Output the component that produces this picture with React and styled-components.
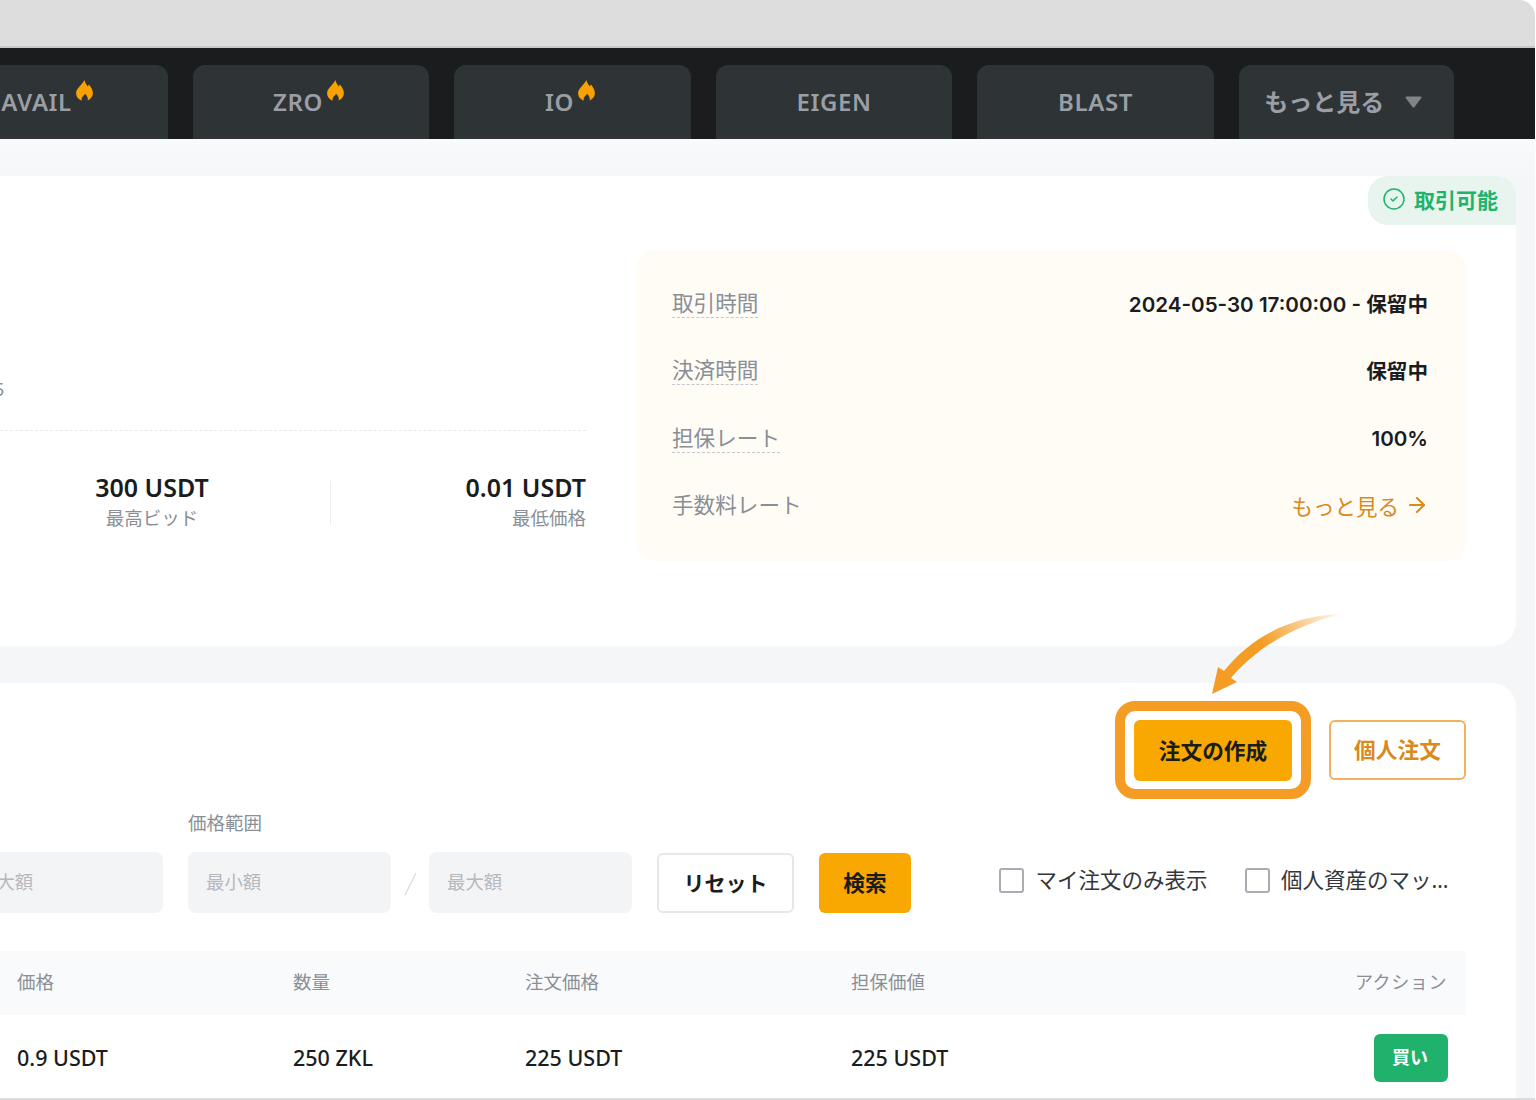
import React from "react";
import styled, { createGlobalStyle } from "styled-components";
import { ArrowRight, CircleCheck } from "lucide-react";

const Global = createGlobalStyle`
  html, body { margin: 0; padding: 0; background: #fff; }
  body { font-family: "Noto Sans", "Noto Sans CJK JP", sans-serif; color: #1a1c1e; }
  * { box-sizing: border-box; }
`;

const Viewport = styled.div`
  position: relative;
  width: 1536px;
  height: 1100px;
  overflow: hidden;
  background: #fff;
`;
const Frame = styled.div`
  width: 1534.5px;
  height: 1100px;
  display: flex;
  flex-direction: column;
  border-top-right-radius: 16px;
  border-bottom: 2px solid #dcdcdc;
  overflow: hidden;
  background: #f5f6f8;
`;
const ChromeBar = styled.div`
  flex: none;
  height: 48px;
  background: #dddddd;
  border-bottom: 2px solid #c8c8c8;
`;
const Nav = styled.nav`
  flex: none;
  height: 91px;
  padding: 17px 0 0 0;
  margin-left: -68.7px;
  display: flex;
  gap: 25px;
  background: #1a1c1e;
`;
const Tab = styled.div`
  flex: none;
  width: ${(p) => p.$w || 236.5}px;
  height: 74px;
  display: flex;
  align-items: center;
  justify-content: center;
  gap: 4px;
  padding-right: ${(p) => p.$pr || 0}px;
  padding-bottom: ${(p) => p.$pb || 0}px;
  background: #2e3336;
  border-radius: 12px 12px 0 0;
  color: #9a9ea5;
  font-size: 24px;
  font-weight: 600;
  letter-spacing: 0.6px;
`;
const MoreLabel = styled.span`
  font-size: 24px;
  font-weight: 700;
  letter-spacing: 0;
  padding-bottom: 4px;
`;
const Caret = styled.svg`
  margin-left: 17px;
  width: 17px;
  height: 12px;
  color: #808488;
`;
const FlameIcon = styled.svg`
  width: 17px;
  height: 21px;
  margin-bottom: 22px;
  color: #f8a100;
`;
const Flame = () => (
  <FlameIcon viewBox="0 0 16 20" fill="currentColor">
    <path d="M8 0C8.5 3 10 4.5 11 6C11.5 5.5 12 5 12 4C14.5 7 16 9.5 16 12.5C16 15.5 14 18 11 19.5C11.5 17.5 11 15 8.5 13C8 14.5 6 15.5 5.5 17C5.2 18 5.3 19 5.5 19.5C2.5 18.5 0 16 0 12.5C0 8 5 5.5 8 0Z" />
  </FlameIcon>
);

const Main = styled.main`
  flex: 1;
  min-height: 0;
  display: flex;
  flex-direction: column;
  gap: 37px;
  padding: 37px 18.5px 0 0;
  background: linear-gradient(#f9fafc 0, #f5f6f8 40px);
`;
const SummaryCard = styled.section`
  position: relative;
  flex: none;
  height: 470px;
  display: flex;
  gap: 50px;
  padding: 74px 50px 0 0;
  background: #fff;
  border-radius: 0 24px 24px 0;
`;
const Badge = styled.div`
  position: absolute;
  top: 0;
  right: 0;
  width: 148px;
  height: 49px;
  padding: 0 4px 3px 0;
  display: flex;
  align-items: center;
  justify-content: center;
  gap: 8px;
  background: #e8f5ee;
  border-radius: 20px 20px 0 20px;
  color: #1fb36b;
  font-size: 21px;
  font-weight: 700;
`;
const LeftCol = styled.div`
  flex: none;
  width: 586px;
  display: flex;
  flex-direction: column;
`;
const Meta = styled.div`
  margin: 126px 0 0 -6px;
  height: 26px;
  line-height: 26px;
  font-size: 18px;
  color: #8a8f96;
`;
const DashedRule = styled.div`
  margin-top: 28px;
  border-top: 1px dashed #e8e9ec;
`;
const Stats = styled.div`
  display: flex;
  align-items: stretch;
  margin-top: 40px;
`;
const Stat = styled.div`
  flex: ${(p) => (p.$end ? "1" : "none")};
  width: ${(p) => (p.$end ? "auto" : "304px")};
  margin-right: ${(p) => (p.$end ? 0 : "26px")};
  text-align: ${(p) => (p.$end ? "right" : "center")};
`;
const StatValue = styled.div`
  font-size: 25px;
  font-weight: 600;
  line-height: 32px;
`;
const StatLabel = styled.div`
  font-size: 18.5px;
  line-height: 26px;
  margin-top: 2px;
  color: #8a8f96;
`;
const VRule = styled.div`
  flex: none;
  width: 1px;
  height: 44px;
  margin-top: 10px;
  background: #eceef1;
`;
const InfoPanel = styled.div`
  flex: 1;
  height: 311px;
  padding: 20px 38px 22px 36px;
  display: flex;
  flex-direction: column;
  justify-content: space-between;
  background: #fffcf6;
  border-radius: 20px;
`;
const InfoRow = styled.div`
  display: flex;
  align-items: center;
  justify-content: space-between;
  height: 67.5px;
`;
const InfoLabel = styled.span`
  font-size: 21.6px;
  line-height: 29px;
  margin-bottom: 1px;
  color: #8a8f96;
  border-bottom: ${(p) => (p.$plain ? "0" : "1px dashed #c4c7cc")};
`;
const InfoValue = styled.span`
  display: block;
  font-family: Inter, "Noto Sans CJK JP", sans-serif;
  font-size: 20.6px;
  font-weight: 600;
  line-height: 28px;
  padding-top: 2px;
`;
const MoreLink = styled.span`
  display: inline-flex;
  align-items: center;
  gap: 6px;
  margin-right: -1px;
  font-size: 21.5px;
  color: #d98a1a;
`;

const OrdersCard = styled.section`
  flex: 1;
  min-height: 0;
  display: flex;
  flex-direction: column;
  padding: 37px 50px 0 0;
  background: #fff;
  border-radius: 0 24px 0 0;
`;
const Actions = styled.div`
  flex: none;
  display: flex;
  justify-content: flex-end;
  gap: 37px;
  height: 61px;
`;
const Highlight = styled.div`
  position: relative;
  width: 158px;
  &::before {
    content: "";
    position: absolute;
    inset: -19px -19px -18px;
    border: 10px solid #f59c25;
    border-radius: 20px;
    pointer-events: none;
  }
`;
const PrimaryButton = styled.button`
  display: flex;
  align-items: center;
  justify-content: center;
  width: ${(p) => p.$w}px;
  height: ${(p) => p.$h || 61}px;
  padding: 0 0 3px;
  border: 0;
  border-radius: 6px;
  background: #f8a800;
  color: #1a1c1e;
  font: 700 21.7px "Noto Sans", "Noto Sans CJK JP", sans-serif;
`;
const GhostButton = styled.button`
  display: flex;
  align-items: center;
  justify-content: center;
  width: 137px;
  height: ${(p) => p.$h || 60}px;
  padding: 0 0 3px;
  background: #fff;
  border: ${(p) => (p.$accent ? "2px solid #f3b060" : "2px solid #e5e7eb")};
  border-radius: 6px;
  color: ${(p) => (p.$accent ? "#d98a1a" : "#1a1c1e")};
  font: 700 ${(p) => (p.$accent ? 21.7 : 21)}px "Noto Sans", "Noto Sans CJK JP", sans-serif;
`;
const ArrowSvg = styled.svg`
  position: absolute;
  left: 1200px;
  top: 605px;
  width: 150px;
  height: 100px;
  pointer-events: none;
`;
const Filters = styled.div`
  flex: none;
  display: flex;
  align-items: flex-end;
  margin-top: 29px;
  margin-left: -40px;
  gap: 25px;
`;
const Field = styled.div`
  display: flex;
  flex-direction: column;
  flex: none;
`;
const FieldLabel = styled.div`
  height: 26px;
  line-height: 26px;
  margin-bottom: 16px;
  font-size: 18.5px;
  color: #8a8f96;
`;
const RangeRow = styled.div`
  display: flex;
  align-items: center;
`;
const FakeInput = styled.div`
  width: 203px;
  height: 61px;
  padding: 0 0 4px 18px;
  display: flex;
  align-items: center;
  border-radius: 8px;
  background: #f3f4f6;
  color: #b5b8bd;
  font-size: 18.4px;
`;
const Slash = styled.svg`
  flex: none;
  width: 38px;
  height: 24px;
  margin-top: 2px;
`;
const FilterButtons = styled.div`
  display: flex;
  gap: 25px;
  height: 60px;
`;
const Checks = styled.div`
  margin-left: 63px;
  height: 61px;
  display: flex;
  align-items: center;
  gap: 35px;
  padding-bottom: 4px;
`;
const CheckItem = styled.label`
  display: flex;
  align-items: center;
  gap: 11.5px;
  font-size: 21.5px;
  color: #33373b;
`;
const Box = styled.span`
  flex: none;
  width: 25px;
  height: 25px;
  border: 2px solid #a9adb3;
  border-radius: 3px;
  background: #fff;
`;
const CheckText = styled.span`
  display: block;
  width: ${(p) => p.$w}px;
  padding-bottom: 4px;
  white-space: nowrap;
  overflow: hidden;
  text-overflow: ellipsis;
`;
const TableHead = styled.div`
  flex: none;
  display: grid;
  grid-template-columns: 276px 232px 326px 1fr;
  align-items: center;
  height: 64px;
  margin-top: 38px;
  padding: 0 19px 4px 17px;
  background: #f9fafb;
  font-size: 18.5px;
  color: #8a8f96;
`;
const TableRow = styled.div`
  flex: none;
  display: grid;
  grid-template-columns: 276px 232px 326px 1fr;
  align-items: center;
  height: 84px;
  padding: 1px 18px 0 17px;
  font-size: 21.5px;
  font-weight: 500;
`;
const RowSplit = styled.div`
  display: flex;
  align-items: center;
  justify-content: space-between;
`;
const EndCell = styled.div`
  display: flex;
  justify-content: flex-end;
`;
const ActionHead = styled(EndCell)`
  letter-spacing: 0.6px;
  font-size: 18px;
`;
const BuyButton = styled.button`
  width: 74px;
  height: 48px;
  padding: 0 2px 4px 0;
  border: 0;
  border-radius: 6px;
  background: #20b26c;
  color: #fff;
  font: 700 18px "Noto Sans", "Noto Sans CJK JP", sans-serif;
`;

export default function App() {
  return (
    <Viewport>
      <Global />
      <Frame>
        <ChromeBar />
        <Nav>
          <Tab $pr={5} $pb={2}>AVAIL<Flame /></Tab>
          <Tab $pr={5} $pb={2}>ZRO<Flame /></Tab>
          <Tab $pr={5} $pb={2}>IO<Flame /></Tab>
          <Tab $pb={2}>EIGEN</Tab>
          <Tab $pb={2}>BLAST</Tab>
          <Tab $w={215} $pr={6}>
            <MoreLabel>もっと見る</MoreLabel>
            <Caret viewBox="0 0 17 12" fill="currentColor">
              <path d="M1.5 0.5H15.5C16.4 0.5 16.8 1.4 16.3 2.1L9.3 11.2C8.9 11.7 8.1 11.7 7.7 11.2L0.7 2.1C0.2 1.4 0.6 0.5 1.5 0.5Z" />
            </Caret>
          </Tab>
        </Nav>
        <Main>
          <SummaryCard>
            <Badge>
              <CircleCheck size={24} strokeWidth={1.5} />
              取引可能
            </Badge>
            <LeftCol>
              <Meta>5</Meta>
              <DashedRule />
              <Stats>
                <Stat>
                  <StatValue>300 USDT</StatValue>
                  <StatLabel>最高ビッド</StatLabel>
                </Stat>
                <VRule />
                <Stat $end>
                  <StatValue>0.01 USDT</StatValue>
                  <StatLabel>最低価格</StatLabel>
                </Stat>
              </Stats>
            </LeftCol>
            <InfoPanel>
              <InfoRow>
                <InfoLabel>取引時間</InfoLabel>
                <InfoValue>2024-05-30 17:00:00 - 保留中</InfoValue>
              </InfoRow>
              <InfoRow>
                <InfoLabel>決済時間</InfoLabel>
                <InfoValue>保留中</InfoValue>
              </InfoRow>
              <InfoRow>
                <InfoLabel>担保レート</InfoLabel>
                <InfoValue>100%</InfoValue>
              </InfoRow>
              <InfoRow>
                <InfoLabel $plain>手数料レート</InfoLabel>
                <MoreLink>
                  もっと見る
                  <ArrowRight size={24} strokeWidth={2} />
                </MoreLink>
              </InfoRow>
            </InfoPanel>
          </SummaryCard>
          <OrdersCard>
            <Actions>
              <Highlight>
                <PrimaryButton $w={158}>注文の作成</PrimaryButton>
              </Highlight>
              <GhostButton $accent>個人注文</GhostButton>
            </Actions>
            <Filters>
              <Field>
                <FakeInput>最大額</FakeInput>
              </Field>
              <Field>
                <FieldLabel>価格範囲</FieldLabel>
                <RangeRow>
                  <FakeInput>最小額</FakeInput>
                  <Slash viewBox="0 0 38 24" fill="none">
                    <path d="M25 1L14 23" stroke="#d9dbdf" strokeWidth="1.2" />
                  </Slash>
                  <FakeInput>最大額</FakeInput>
                </RangeRow>
              </Field>
              <FilterButtons>
                <GhostButton>リセット</GhostButton>
                <PrimaryButton $w={92} $h={60}>検索</PrimaryButton>
              </FilterButtons>
              <Checks>
                <CheckItem>
                  <Box />
                  <CheckText $w={174}>マイ注文のみ表示</CheckText>
                </CheckItem>
                <CheckItem>
                  <Box />
                  <CheckText $w={170}>個人資産のマッチング</CheckText>
                </CheckItem>
              </Checks>
            </Filters>
            <TableHead>
              <div>価格</div>
              <div>数量</div>
              <div>注文価格</div>
              <RowSplit>
                <div>担保価値</div>
                <ActionHead>アクション</ActionHead>
              </RowSplit>
            </TableHead>
            <TableRow>
              <div>0.9 USDT</div>
              <div>250 ZKL</div>
              <div>225 USDT</div>
              <RowSplit>
                <div>225 USDT</div>
                <EndCell><BuyButton>買い</BuyButton></EndCell>
              </RowSplit>
            </TableRow>
          </OrdersCard>
        </Main>
      </Frame>
      <ArrowSvg viewBox="1200 605 150 100">
        <defs>
          <linearGradient id="arrowFade" gradientUnits="userSpaceOnUse" x1="1212" y1="694" x2="1343" y2="614">
            <stop offset="0" stopColor="#f59c25" />
            <stop offset="0.45" stopColor="#f59c25" />
            <stop offset="1" stopColor="#f59c25" stopOpacity="0.05" />
          </linearGradient>
        </defs>
        <path
          d="M1340 614C1290 616 1250 638 1224 671L1218 667L1212 694L1237 682L1231 678C1262 642 1300 625 1340 614Z"
          fill="url(#arrowFade)"
        />
      </ArrowSvg>
    </Viewport>
  );
}
